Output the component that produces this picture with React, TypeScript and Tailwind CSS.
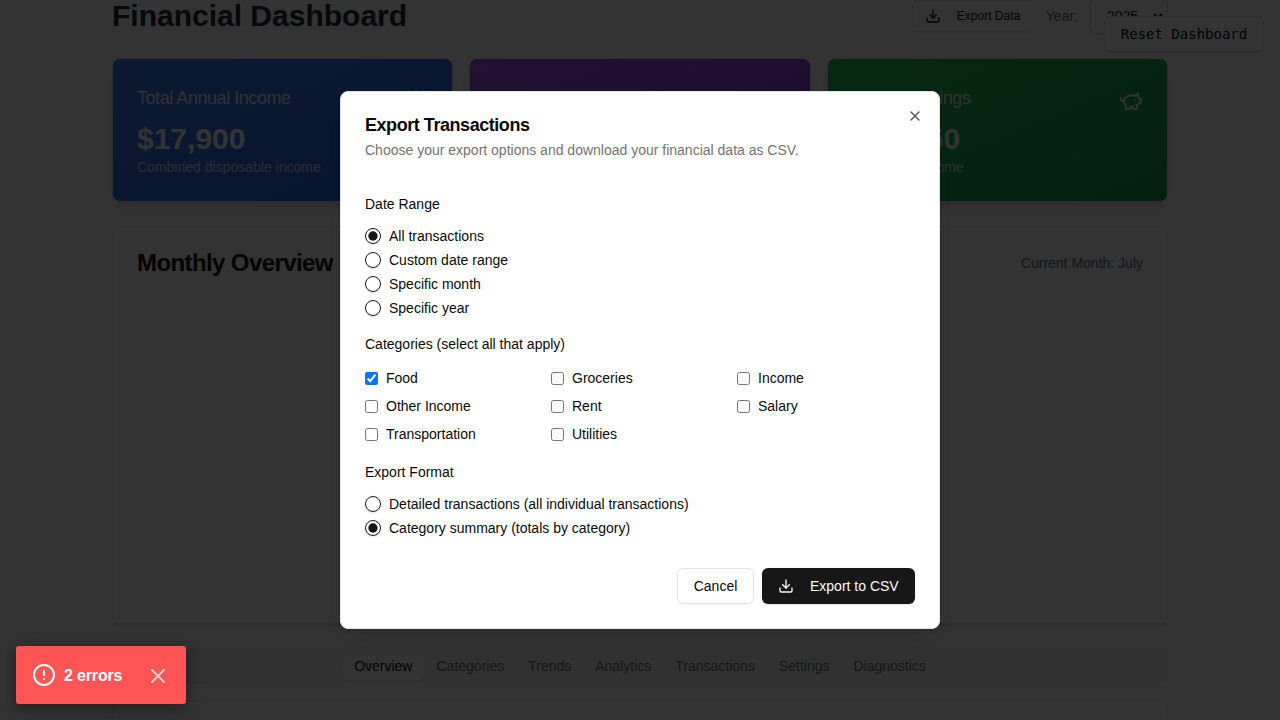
import React from "react";
import { Download, DollarSign, X } from "lucide-react";

const PiggyIcon = () => (
  <svg className="mt-0.5 size-6 opacity-90" viewBox="0 0 24 24" fill="none" stroke="currentColor" strokeWidth="2" strokeLinecap="round" strokeLinejoin="round">
    <path d="M19 5c-1.5 0-2.8 1.4-3 2-3.5-1.5-11-.3-11 5 0 1.8 0 3 2 4.500V20h4v-2h3v2h4v-4c1-.5 1.700-1 2-2h2v-4h-2c0-1-.5-1.500-1-2V5z" />
    <path d="M2 9v1c0 1.100.9 2 2 2h1" />
    <path d="M16 11h.01" />
  </svg>
);

const Radio = ({ label, on }: { label: string; on?: boolean }) => (
  <label className="flex items-center gap-2">
    <span className="flex size-4 items-center justify-center rounded-full border border-neutral-900 shadow-sm">
      {on && (
        <svg className="size-3.5" viewBox="0 0 15 15">
          <circle cx="7.5" cy="7.5" r="5" className="fill-neutral-900" />
        </svg>
      )}
    </span>
    <span className="text-sm leading-[14px]">{label}</span>
  </label>
);

const Stat = ({ title, value, note, tone, children }: { title?: string; value?: string; note?: string; tone: string; children?: React.ReactNode }) => (
  <div className={`h-36 rounded-lg border border-neutral-200 bg-linear-to-br p-6 text-white shadow-lg ${tone}`}>
    <div className="flex h-[34px] items-center justify-between">
      <h3 className="pb-[5px] text-lg leading-7 tracking-[-0.45px] opacity-90">{title}</h3>
      {children}
    </div>
    <p className="mt-1 text-[30px] leading-9 font-bold">{value}</p>
    <p className="text-sm opacity-75">{note}</p>
  </div>
);

const categories = ["Food", "Groceries", "Income", "Other Income", "Rent", "Salary", "Transportation", "Utilities"];
const tabs = ["Categories", "Trends", "Analytics", "Transactions", "Settings", "Diagnostics"];

export default function App() {
  return (
    <div className="relative h-[720px] overflow-hidden bg-white font-['Liberation_Sans',sans-serif] text-neutral-950">
      <div className="mx-auto flex w-[1056px] flex-col">
        <header className="flex h-[58px] justify-between">
          <h1 className="-mt-1 text-[30px] leading-10 font-bold text-gray-800">Financial Dashboard</h1>
          <div className="-mt-1 flex h-10 items-center">
            <button className="flex h-8 w-[122px] items-center rounded-md border border-neutral-200 px-3 text-xs shadow-xs">
              <Download className="mr-4 size-4" />
              <span className="whitespace-nowrap">Export Data</span>
            </button>
            <span className="mr-3 ml-3 text-sm text-gray-500">Year:</span>
            <div className="flex h-9 w-[78px] items-center justify-between rounded-md border border-gray-300 pr-1 pl-4 text-sm">
              2025
              <svg className="size-2.5" viewBox="0 0 10 10" fill="none" stroke="currentColor" strokeWidth="2">
                <path d="m1 3 4 4 4-4" />
              </svg>
            </div>
          </div>
        </header>

        <div className="grid grid-cols-3 gap-4">
          <Stat title="Total Annual Income" value="$17,900" note="Combined disposable income" tone="from-[#3b82f6] to-[#2563eb]">
            <DollarSign className="mt-0.5 size-6 opacity-90" />
          </Stat>
          <Stat tone="from-[#a855f7] to-[#9333ea]" />
          <Stat title="Annual Savings" value="$14,650" note="From total income" tone="from-[#22c55e] to-[#16a34a]">
            <PiggyIcon />
          </Stat>
        </div>

        <section className="mt-6 h-[398px] rounded-lg border border-neutral-200 px-6 pt-5 shadow-md">
          <div className="flex items-center justify-between">
            <h2 className="text-2xl font-semibold tracking-[-0.6px]">Monthly Overview</h2>
            <span className="text-sm text-gray-500">Current Month: July</span>
          </div>
        </section>

        <nav className="mt-6 flex h-9 items-center justify-center rounded-lg bg-neutral-100 text-sm text-neutral-500">
          <span className="rounded-md bg-white px-3 py-1 text-neutral-950 shadow-sm">Overview</span>
          {tabs.map((t) => (
            <span key={t} className="px-3 py-1">{t}</span>
          ))}
        </nav>
        <div className="mt-4 h-40 rounded-xl border border-neutral-200 shadow-sm" />
      </div>

      <button className="absolute top-4 right-4 h-9 w-40 rounded-md border border-neutral-200 bg-white font-['DejaVu_Sans_Mono',monospace] text-sm shadow-xs">
        Reset Dashboard
      </button>

      <div className="absolute inset-0 bg-black/80" />

      <div className="absolute top-[91px] left-[340px] flex h-[538px] w-[600px] flex-col rounded-lg border border-neutral-200 bg-white px-6 pt-6 shadow-lg">
        <button className="absolute top-4 right-4 opacity-70">
          <X className="size-4" />
        </button>
        <h2 className="text-lg leading-[18px] font-semibold tracking-[-0.45px]">Export Transactions</h2>
        <p className="mt-1.5 text-sm text-neutral-500">Choose your export options and download your financial data as CSV.</p>

        <h3 className="mt-[37px] text-sm leading-[14px]">Date Range</h3>
        <div className="mt-[17px] grid gap-2">
          <Radio label="All transactions" on />
          <Radio label="Custom date range" />
          <Radio label="Specific month" />
          <Radio label="Specific year" />
        </div>

        <h3 className="mt-[21px] text-sm leading-[14px]">Categories (select all that apply)</h3>
        <div className="mt-[17px] grid grid-cols-3 gap-2">
          {categories.map((c) => (
            <label key={c} className="flex h-5 items-center gap-2 text-sm">
              <input type="checkbox" defaultChecked={c === "Food"} className="size-[13px]" />
              {c}
            </label>
          ))}
        </div>

        <h3 className="mt-[21px] text-sm leading-[14px]">Export Format</h3>
        <div className="mt-[17px] grid gap-2">
          <Radio label="Detailed transactions (all individual transactions)" />
          <Radio label="Category summary (totals by category)" on />
        </div>

        <div className="mt-8 flex justify-end gap-2 text-sm">
          <button className="h-9 w-[77px] rounded-md border border-neutral-200 shadow-xs">Cancel</button>
          <button className="flex h-9 w-[153px] items-center rounded-md bg-neutral-900 px-4 text-neutral-50 shadow-sm">
            <Download className="mr-4 size-4" />
            <span className="whitespace-nowrap">Export to CSV</span>
          </button>
        </div>
      </div>

      <div className="absolute bottom-4 left-4 flex h-[58px] w-[170px] items-center rounded-[3px] bg-[#ff5555] pl-4 text-white shadow-[0_4px_16px_rgba(0,0,0,0.4)]">
        <svg className="size-6 shrink-0" viewBox="0 0 24 24" fill="none" stroke="currentColor" strokeWidth="2" strokeLinecap="round">
          <circle cx="12" cy="12" r="10" />
          <path d="M12 8v4M12 16h.01" />
        </svg>
        <span className="mt-0.5 ml-2 w-[82px] text-base font-bold tracking-[-0.16px] whitespace-nowrap">2 errors</span>
        <svg className="mt-0.5 size-6 opacity-70" viewBox="0 0 24 24" fill="none" stroke="currentColor" strokeWidth="2" strokeLinecap="round">
          <path d="M18 6 6 18M6 6l12 12" />
        </svg>
      </div>
    </div>
  );
}
